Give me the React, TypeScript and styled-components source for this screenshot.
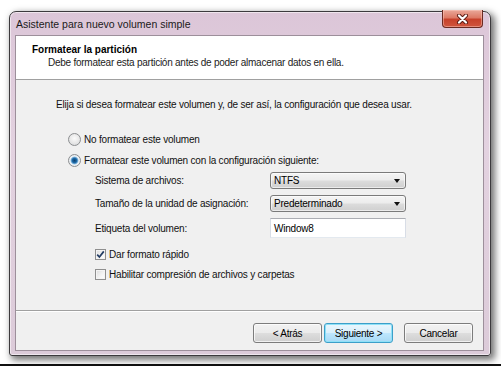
import React from "react"
import styled, { createGlobalStyle } from "styled-components"

const GlobalStyle = createGlobalStyle`
	html, body {
		margin: 0;
		padding: 0;
		background: #ffffff;
	}

	body {
		font-family: "Liberation Sans", Arial, sans-serif;
		font-size: 10px;
		letter-spacing: -0.2px;
		color: #111111;
	}
`

const PageElement = styled.div`
	width: 501px;
	height: 366px;
	display: flex;
	flex-direction: column;
	overflow: hidden;
`

const StageElement = styled.div`
	flex: 1;
	padding: 11px 0 0 9px;
`

const BottomStripElement = styled.div`
	height: 2px;
	background: #111111;
`

const WindowElement = styled.div`
	width: 482px;
	height: 345px;
	box-sizing: border-box;
	border: 1px solid #3c3a3d;
	border-radius: 7px 7px 3px 3px;
	background: linear-gradient(to bottom, #dcc6d8 0%, #e3d2e0 40%, #dccbd9 100%);
	box-shadow: 3px 3px 7px 1px rgba(0, 0, 0, 0.55), inset 0 0 0 1px rgba(255, 255, 255, 0.55);
	display: flex;
	flex-direction: column;
	position: relative;
`

const TitleBarElement = styled.div`
	height: 23px;
	display: flex;
	flex-direction: row;
	align-items: center;
	padding-left: 6px;
	color: #1a1a1a;
	font-size: 10.5px;
	letter-spacing: 0;
`

const CloseButtonElement = styled.div`
	position: absolute;
	top: -2px;
	right: 7px;
	width: 41px;
	height: 18px;
	box-sizing: border-box;
	border: 1px solid #6b2a22;
	border-top: none;
	border-radius: 0 0 4px 4px;
	background: linear-gradient(to bottom, #e9a899 0%, #dd7a66 45%, #c7412b 55%, #d0553e 100%);
	box-shadow: inset 0 0 0 1px rgba(255, 210, 200, 0.45);
	display: flex;
	align-items: center;
	justify-content: center;
`

const ClientElement = styled.div`
	flex: 1;
	margin: 0 6px 4px 5px;
	border: 1px solid #9d8f9b;
	background: #f0f0f0;
	display: flex;
	flex-direction: column;
`

const HeaderElement = styled.div`
	height: 44px;
	box-sizing: border-box;
	background: #ffffff;
	border-bottom: 1px solid #a0a0a0;
	padding: 7px 0 0 16px;
`

const HeaderTitleElement = styled.div`
	font-weight: 700;
	font-size: 10px;
	letter-spacing: 0;
	line-height: 13px;
	color: #000000;
`

const HeaderSubtitleElement = styled.div`
	font-size: 10px;
	letter-spacing: -0.25px;
	line-height: 13px;
	padding-left: 16px;
	color: #1c1c1c;
`

const BodyElement = styled.div`
	flex: 1;
	padding: 18px 0 0 40px;
	display: flex;
	flex-direction: column;
`

const IntroElement = styled.div`
	line-height: 13px;
	white-space: nowrap;
`

const OptionsElement = styled.div`
	margin-top: 18px;
	padding-left: 12px;
	display: flex;
	flex-direction: column;
`

const RadioRowElement = styled.label`
	height: 21px;
	display: flex;
	flex-direction: row;
	align-items: center;
	gap: 3px;
	white-space: nowrap;
`

const RadioElement = styled.span<{ $checked?: boolean }>`
	width: 13px;
	height: 13px;
	box-sizing: border-box;
	border-radius: 50%;
	border: 1px solid #8c8e90;
	background: ${props => props.$checked
		? "radial-gradient(circle at 50% 50%, #0b3f6e 0%, #1f6ba8 30%, #7fb6e0 45%, #eef2f5 55%, #dfe3e7 100%)"
		: "radial-gradient(circle at 50% 40%, #fbfbfb 0%, #e9e9e9 50%, #d2d4d6 100%)"};
`

const FormElement = styled.div`
	margin-top: 1px;
	padding-left: 27px;
	display: grid;
	grid-template-columns: 175px 136px;
	grid-template-rows: 17px 17px 20px;
	row-gap: 6px;
	align-items: center;
`

const FieldLabelElement = styled.span`
	line-height: 13px;
	white-space: nowrap;
`

const ComboElement = styled.div`
	height: 17px;
	box-sizing: border-box;
	border: 1px solid #7a7a7a;
	border-radius: 3px;
	background: linear-gradient(to bottom, #f4f4f4 0%, #ececec 48%, #dcdcdc 52%, #cfcfcf 100%);
	box-shadow: inset 0 0 0 1px rgba(255, 255, 255, 0.6);
	display: flex;
	flex-direction: row;
	align-items: center;
	padding: 0 5px 0 3px;
	color: #000000;
`

const ComboTextElement = styled.span`
	flex: 1;
`

const ComboArrowElement = styled.span`
	width: 0;
	height: 0;
	border-left: 3px solid transparent;
	border-right: 3px solid transparent;
	border-top: 4px solid #111111;
`

const InputElement = styled.div`
	height: 20px;
	box-sizing: border-box;
	border: 1px solid #d8dde6;
	border-top-color: #abadb3;
	border-bottom-color: #e3e9ef;
	background: #ffffff;
	padding-left: 3px;
	display: flex;
	align-items: center;
	color: #000000;
`

const ChecksElement = styled.div`
	margin-top: 6px;
	padding-left: 27px;
	display: flex;
	flex-direction: column;
`

const CheckRowElement = styled.label`
	height: 20px;
	display: flex;
	flex-direction: row;
	align-items: center;
	gap: 3px;
	white-space: nowrap;
`

const CheckBoxElement = styled.span`
	width: 11px;
	height: 11px;
	box-sizing: border-box;
	border: 1px solid #8f8f8f;
	background: linear-gradient(135deg, #dcdcdc 0%, #f4f4f4 60%, #ffffff 100%);
	box-shadow: inset 0 0 0 1px #f4f4f4;
	display: flex;
	align-items: center;
	justify-content: center;
`

const FooterElement = styled.div`
	height: 40px;
	border-top: 1px solid #a0a0a0;
	box-shadow: inset 0 1px 0 #ffffff;
	box-sizing: border-box;
	display: flex;
	flex-direction: row;
	justify-content: flex-end;
	align-items: flex-start;
	padding: 12px 10px 0 0;
`

const ButtonElement = styled.button<{ $primary?: boolean, $gap?: number }>`
	width: 69px;
	height: 20px;
	margin-left: ${props => props.$gap ?? 0}px;
	padding: 0;
	font-family: "Liberation Sans", Arial, sans-serif;
	font-size: 10px;
	letter-spacing: -0.25px;
	color: #000000;
	border-radius: 3px;
	border: 1px solid ${props => props.$primary ? "#3c9fc9" : "#7c7c7c"};
	background: ${props => props.$primary
		? "linear-gradient(to bottom, #eaf6fd 0%, #d9f0fc 48%, #bee6fd 52%, #a7d9f5 100%)"
		: "linear-gradient(to bottom, #f2f2f2 0%, #ebebeb 48%, #dddddd 52%, #cfcfcf 100%)"};
	box-shadow: ${props => props.$primary
		? "inset 0 0 0 1px #8fe1f7"
		: "inset 0 0 0 1px rgba(255, 255, 255, 0.7)"};
`

function CloseGlyph() {
	return (
		<svg width="13" height="10" viewBox="0 0 13 10">
			<path d="M3 1.5 L10 8.5 M10 1.5 L3 8.5" stroke="#5a1a12" strokeWidth="4" strokeLinecap="round" />
			<path d="M3 1.5 L10 8.5 M10 1.5 L3 8.5" stroke="#ffffff" strokeWidth="2.2" strokeLinecap="round" />
		</svg>
	)
}

function CheckGlyph() {
	return (
		<svg width="9" height="9" viewBox="0 0 9 9">
			<path d="M1.2 4.6 L3.4 7 L7.8 1.4" fill="none" stroke="#233c63" strokeWidth="1.7" />
		</svg>
	)
}

function Radio({ checked, text }: { checked?: boolean, text: string }) {
	return (
		<RadioRowElement>
			<RadioElement $checked={checked} />
			<span>{text}</span>
		</RadioRowElement>
	)
}

function CheckOption({ checked, text }: { checked?: boolean, text: string }) {
	return (
		<CheckRowElement>
			<CheckBoxElement>{checked ? <CheckGlyph /> : null}</CheckBoxElement>
			<span>{text}</span>
		</CheckRowElement>
	)
}

function Combo({ value }: { value: string }) {
	return (
		<ComboElement>
			<ComboTextElement>{value}</ComboTextElement>
			<ComboArrowElement />
		</ComboElement>
	)
}

export default function App() {
	return (
		<PageElement>
			<GlobalStyle />
			<StageElement>
				<WindowElement>
					<TitleBarElement>Asistente para nuevo volumen simple</TitleBarElement>
					<CloseButtonElement><CloseGlyph /></CloseButtonElement>
					<ClientElement>
						<HeaderElement>
							<HeaderTitleElement>Formatear la partición</HeaderTitleElement>
							<HeaderSubtitleElement>Debe formatear esta partición antes de poder almacenar datos en ella.</HeaderSubtitleElement>
						</HeaderElement>
						<BodyElement>
							<IntroElement>Elija si desea formatear este volumen y, de ser así, la configuración que desea usar.</IntroElement>
							<OptionsElement>
								<Radio text="No formatear este volumen" />
								<Radio checked text="Formatear este volumen con la configuración siguiente:" />
								<FormElement>
									<FieldLabelElement>Sistema de archivos:</FieldLabelElement>
									<Combo value="NTFS" />
									<FieldLabelElement>Tamaño de la unidad de asignación:</FieldLabelElement>
									<Combo value="Predeterminado" />
									<FieldLabelElement>Etiqueta del volumen:</FieldLabelElement>
									<InputElement>Window8</InputElement>
								</FormElement>
								<ChecksElement>
									<CheckOption checked text="Dar formato rápido" />
									<CheckOption text="Habilitar compresión de archivos y carpetas" />
								</ChecksElement>
							</OptionsElement>
						</BodyElement>
						<FooterElement>
							<ButtonElement>&lt; Atrás</ButtonElement>
							<ButtonElement $primary $gap={2}>Siguiente &gt;</ButtonElement>
							<ButtonElement $gap={11}>Cancelar</ButtonElement>
						</FooterElement>
					</ClientElement>
				</WindowElement>
			</StageElement>
			<BottomStripElement />
		</PageElement>
	)
}
